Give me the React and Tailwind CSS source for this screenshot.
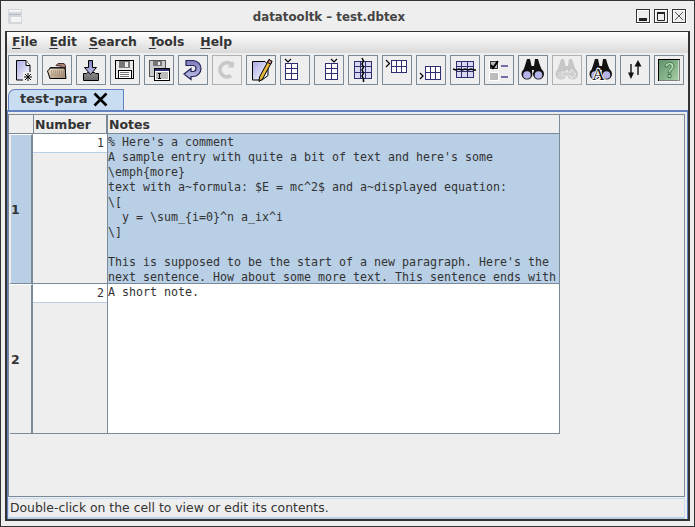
const NAVY = '#2e2e70';

const lines = [
  "% Here's a comment",
  "A sample entry with quite a bit of text and here's some",
  '\\emph{more}',
  'text with a~formula: $E = mc^2$ and a~displayed equation:',
  '\\[',
  '  y = \\sum_{i=0}^n a_ix^i',
  '\\]',
  ' ',
  "This is supposed to be the start of a new paragraph. Here's the",
  'next sentence. How about some more text. This sentence ends with',
];

// shared table glyph, cols and rows are line offsets in px
const Grid = ({ x, y, w, h, cols, rows, fill = '#fff' }) => (
  <g shapeRendering="crispEdges">
    <rect x={x + 1} y={y + 1} width={w} height={h} fill="#fff" />
    <rect x={x + 0.5} y={y + 0.5} width={w} height={h} fill={fill} stroke={NAVY} />
    {cols.map((c) => <path key={c} d={`M${x + c + 0.5} ${y}v${h}`} stroke={NAVY} />)}
    {rows.map((r) => <path key={r} d={`M${x} ${y + r + 0.5}h${w}`} stroke={NAVY} />)}
  </g>
);

const Defs = () => (
  <svg width="0" height="0" className="absolute">
    <defs>
      <linearGradient id="page" x1="0" y1="0" x2="1" y2="1">
        <stop offset="0" stopColor="#a8a8e4" />
        <stop offset="1" stopColor="#ffffff" />
      </linearGradient>
      <linearGradient id="arrow" x1="0" y1="0" x2="0" y2="1">
        <stop offset="0" stopColor="#7a7ab8" />
        <stop offset="1" stopColor="#c4c4ea" />
      </linearGradient>
      <linearGradient id="help" x1="0" y1="0" x2="1" y2="1">
        <stop offset="0" stopColor="#5f9068" />
        <stop offset="1" stopColor="#a8d0a8" />
      </linearGradient>
      <linearGradient id="tray" x1="0" y1="0" x2="0" y2="1">
        <stop offset="0" stopColor="#8a8a8a" />
        <stop offset="1" stopColor="#6a6a6a" />
      </linearGradient>
      <linearGradient id="folder" x1="0" y1="0" x2="1" y2="1">
        <stop offset="0" stopColor="#f4e6d0" />
        <stop offset="1" stopColor="#9a8068" />
      </linearGradient>
    </defs>
  </svg>
);

const Binoculars = ({ color = '#111', lens = '#b4b4ea' }) => (
  <g>
    <path d="M6 1h3l1.500 7h2.500l1-7h3l1.500 5L22 15H13V12h-2v3H1.500L4.500 6z" fill={color} />
    <circle cx="6" cy="16" r="5.500" fill={color} />
    <circle cx="17.500" cy="16" r="5.500" fill={color} />
    <circle cx="6" cy="17" r="3.800" fill={lens} />
    <circle cx="17.500" cy="17" r="3.800" fill={lens} />
  </g>
);

const icons = {
  newFile: (
    <g>
      <path d="M5.500 2.500H15l4 5v10l-5 4.500H5.500z" fill="url(#page)" stroke="#000" />
      <path d="M15 2.500v5h4" fill="#fff" stroke="#000" />
      <rect x="12" y="14" width="10" height="10" fill="#eee" />
      <path d="M17 15v8M13 19h8M14 16l6 6M20 16l-6 6" stroke="#000" />
    </g>
  ),
  open: (
    <g>
      <path d="M11 7.500l2-2h6l1.500 2v13H16V8z" fill="#a57f70" stroke="#4a2c2c" />
      <path d="M5 9.500h15v11H5z" fill="#fff" stroke="#333" />
      <path d="M2.500 13l3-3H20l1 10.500H5z" fill="url(#folder)" stroke="#000" />
      <path d="M6 13h13M6 15h13M6.500 17h13" stroke="#8f7a66" strokeDasharray="1 1" />
    </g>
  ),
  importFile: (
    <g>
      <path d="M4.500 15.500h3l1 -1h7l1 1h3v7h-15z" fill="url(#tray)" stroke="#000" />
      <path d="M9.500 2.500h4v7h4l-6 7-6-7h4z" fill="url(#arrow)" stroke="#000" />
    </g>
  ),
  save: (
    <g shapeRendering="crispEdges">
      <rect x="2.500" y="2.500" width="18" height="18" fill="#e8e8e8" stroke="#000" />
      <rect x="6" y="3" width="11" height="7" fill="#777" />
      <rect x="12" y="4" width="3" height="5" fill="#eee" />
      <rect x="5" y="12" width="13" height="8" fill="#fff" stroke="#000" />
      <path d="M7 14h9M7 16h9M7 18h9" stroke="#777" />
    </g>
  ),
  saveAs: (
    <g shapeRendering="crispEdges">
      <rect x="2.500" y="2.500" width="16" height="16" fill="#ccc" stroke="#555" />
      <rect x="6" y="3" width="9" height="5" fill="#777" />
      <rect x="11" y="4" width="2" height="3" fill="#eee" />
      <rect x="7.500" y="10.500" width="15" height="12" fill="#fff" stroke="#000" />
      <rect x="8" y="11" width="14" height="2" fill={NAVY} />
      <rect x="9" y="14" width="12" height="7" fill="#bbb" />
      <path d="M11 15h3M12.500 15v5M11 20h3" stroke="#000" />
    </g>
  ),
  undo: (
    <g>
      <path d="M5 2.500h7a8 8 0 0 1 0 16H10v3l-7-5.500 7-5.500v3h2a3 3 0 0 0 0-6H5z" fill="url(#arrow)" stroke="#23235a" strokeWidth="1.200" />
    </g>
  ),
  redo: (
    <g>
      <path d="M19 3v6.500h-6.500l2-2a5 5 0 1 0 0 8.500l3 3a9 9 0 1 1 0-14.500z" fill="#c8c8c8" />
    </g>
  ),
  edit: (
    <g>
      <path d="M3.500 3.500H16l3 3v11l-6 4.500H3.500z" fill="url(#page)" stroke="#000" />
      <path d="M20 1.500l3 2L13.500 21 10 23.500 10.500 19z" fill="#e6b93c" stroke="#000" />
      <path d="M20 1.500l3 2-1.500 2.700-3-2z" fill="#d89090" stroke="#000" />
    </g>
  ),
  colAddLeft: (
    <g>
      <path d="M2 1l3 3 3-3" stroke="#000" strokeWidth="1.200" fill="none" />
      <Grid x={2} y={5} w={12} h={16} cols={[6]} rows={[5, 10]} />
    </g>
  ),
  colAddRight: (
    <g>
      <path d="M14 1l3 3 3-3" stroke="#000" strokeWidth="1.200" fill="none" />
      <Grid x={8} y={5} w={12} h={16} cols={[6]} rows={[5, 10]} />
    </g>
  ),
  colDelete: (
    <g>
      <Grid x={3} y={3} w={17} h={17} cols={[6, 11]} rows={[5, 11]} fill="#d8d8f4" />
      <path d="M11 0l1.500 3-1.500 3 1.500 3-1.500 3 1.500 3-1.500 3 1.500 3v3" stroke="#000" strokeWidth="1.500" fill="none" />
    </g>
  ),
  rowAddTop: (
    <g>
      <path d="M1 2l3.500 3.500L1 9" stroke="#000" strokeWidth="1.200" fill="none" />
      <Grid x={6} y={2} w={15} h={12} cols={[5, 10]} rows={[6]} />
    </g>
  ),
  rowAddBottom: (
    <g>
      <path d="M1 15l3 3-3 3" stroke="#000" strokeWidth="1.200" fill="none" />
      <Grid x={6} y={8} w={15} h={13} cols={[5, 10]} rows={[6]} />
    </g>
  ),
  rowDelete: (
    <g>
      <Grid x={3} y={3} w={17} h={16} cols={[5, 11]} rows={[5, 10]} fill="#d8d8f4" />
      <path d="M0 11l3 1 3-1 3 1 3-1 3 1 3-1 3 1 2 0" stroke="#000" strokeWidth="1.500" fill="none" />
    </g>
  ),
  checklist: (
    <g shapeRendering="crispEdges">
      <rect x="2" y="2" width="10" height="10" fill="#fff" />
      <rect x="3.500" y="3.500" width="7" height="7" fill="#bbb" stroke="#333" />
      <path d="M4 7l2 3 5-7" stroke="#000" strokeWidth="2" fill="none" shapeRendering="auto" />
      <rect x="2" y="14" width="10" height="9" fill="#fff" />
      <rect x="3" y="15" width="8" height="7" fill="#bcbcbc" />
      <rect x="14" y="7" width="7" height="2" fill="#7070a8" />
      <rect x="14" y="18" width="7" height="2" fill="#7070a8" />
    </g>
  ),
  find: <Binoculars />,
  findNext: (
    <g>
      <Binoculars color="#c6c6c6" lens="#d2d2d2" />
      <path d="M7 14h9v-3l5 5-5 5v-3H7z" fill="#cfcfcf" stroke="#e6e6e6" />
    </g>
  ),
  replace: (
    <g>
      <Binoculars />
      <text x="9.500" y="22" fontFamily="Liberation Serif, serif" fontSize="17" textAnchor="middle" fill="#000" stroke="#fff" strokeWidth="2" paintOrder="stroke">A</text>
    </g>
  ),
  sort: (
    <g>
      <path d="M8 6v11" stroke="#222" strokeWidth="1.500" />
      <path d="M5 14.500h6L8 21z" fill="#111" />
      <path d="M15 6v11" stroke="#222" strokeWidth="1.500" />
      <path d="M11.500 8.500L15 2l3.500 6.500z" fill="#111" />
    </g>
  ),
  help: (
    <g>
      <rect x="1.500" y="1.500" width="21" height="21" fill="url(#help)" stroke="#000" />
      <path d="M22 2v21H2" stroke="#fff" fill="none" />
      <path d="M8 9c0-6 9-6 9-.500 0 3-3.500 3-3.500 6.500h-2.500c0-4 3.200-4 3.200-6.500 0-2.500-3.500-2.500-3.700.500zM11 16.500h3v3h-3z" fill="#b4dcb4" stroke="#2f5f3a" strokeWidth="0.800" />
    </g>
  ),
};

const toolbar = [
  'newFile', 'open', 'importFile', 'save', 'saveAs', 'undo', 'redo', 'edit', 'colAddLeft', 'colAddRight',
  'colDelete', 'rowAddTop', 'rowAddBottom', 'rowDelete', 'checklist', 'find', 'findNext', 'replace', 'sort', 'help',
];

const disabled = ['redo', 'findNext'];

const ToolButton = ({ name }) => (
  <button
    className={`flex h-[30px] w-[30px] items-center justify-center border bg-[#eeeeee] ${
      disabled.includes(name) ? 'border-[#b0b0b0]' : 'border-[#7a8a99]'
    }`}
  >
    <svg width="24" height="24" viewBox="0 0 24 24" className="overflow-visible">
      {icons[name]}
    </svg>
  </button>
);

const MenuItem = ({ first, rest }) => (
  <span className="last:ml-[4px]">
    <span className="underline underline-offset-2">{first}</span>
    {rest}
  </span>
);

const WinButton = ({ children }) => (
  <div className="h-[14px] w-[14px] border border-[#333] shadow-[inset_1px_1px_0_#fff,1px_1px_0_#fff]">
    <svg width="12" height="12" viewBox="0 0 12 12">
      {children}
    </svg>
  </div>
);

const RowHeader = ({ label, selected }) => (
  <div
    className={`flex h-[150px] items-center border-t border-r-2 border-b border-l-2 border-t-white border-r-[#7a8a99] border-b-[#7a8a99] border-l-[#eeeeee] pt-[2px] text-[12.500px] font-bold text-[#333] ${
      selected ? 'bg-[#b8cfe5]' : 'bg-[#eeeeee]'
    }`}
  >
    {label}
  </div>
);

const NumberCell = ({ value }) => (
  <div className="h-[150px] border-r border-b border-[#7a8a99] bg-[#eeeeee]">
    <div className="h-[19px] border-b border-[#b8cfe5] bg-white pt-[1px] pr-[3px] text-right font-['DejaVu_Sans_Mono',monospace] text-[11.640px] leading-[16px] text-[#333]">
      {value}
    </div>
  </div>
);

export default function App() {
  return (
    <div className="flex h-[527px] w-[695px] flex-col overflow-hidden border border-[#333] bg-[#eeeeee] font-['DejaVu_Sans',sans-serif]">
      <Defs />
      {/* title bar */}
      <div className="flex h-[30px] shrink-0 items-center pr-[8px] pl-[7px]">
        <svg width="14" height="15" viewBox="0 0 14 15" className="mt-[1px]">
          <rect width="14" height="15" fill="#d4d8dc" />
          <rect x="1" y="1" width="12" height="2" fill="#f4f4f4" />
          <rect x="1" y="5" width="12" height="1" fill="#b0b8c0" />
          <rect x="3" y="8" width="10" height="5" fill="#f4f4f4" />
        </svg>
        <div className="flex-1 pt-[3px] text-center text-[11.800px] font-bold text-[#444]">datatooltk – test.dbtex</div>
        <div className="flex gap-[4px]">
          <WinButton>
            <rect x="2" y="8" width="8" height="3" fill="#222" />
          </WinButton>
          <WinButton>
            <path d="M2.500 3.500h7v7h-7z" fill="none" stroke="#222" />
            <rect x="2" y="2" width="8" height="2" fill="#222" />
          </WinButton>
          <WinButton>
            <path d="M2 2l8 8M10 2l-8 8" stroke="#555" />
          </WinButton>
        </div>
      </div>

      {/* main frame */}
      <div className="mx-[4px] flex h-[490px] flex-col border-x-2 border-t border-b-2 border-[#333] bg-[#eeeeee]">
        <div className="flex h-[21px] shrink-0 items-center gap-[12px] bg-gradient-to-b from-white to-[#dadada] pb-[1px] pl-[5px] text-[12.400px] font-bold text-[#333]">
          <MenuItem first="F" rest="ile" />
          <MenuItem first="E" rest="dit" />
          <MenuItem first="S" rest="earch" />
          <MenuItem first="T" rest="ools" />
          <MenuItem first="H" rest="elp" />
        </div>

        <div className="flex h-[34px] shrink-0 items-center gap-[4px] pl-[1px]">
          {toolbar.map((name) => <ToolButton key={name} name={name} />)}
        </div>

        {/* tab strip */}
        <div className="mt-[2px] flex h-[21px] shrink-0 pl-[1px]">
          <div className="flex w-[116px] items-center gap-[5px] rounded-tl-[7px] border-x border-t border-[#6382bf] bg-[#c8ddf2] pb-[2px] pl-[11px] text-[13px] font-bold text-[#333]">
            test-para
            <svg width="15" height="15" viewBox="0 0 15 15">
              <path d="M1.500 1.500l12 12M13.500 1.500l-12 12" stroke="#000" strokeWidth="2.600" />
            </svg>
          </div>
        </div>

        <div className="flex min-h-0 flex-1 flex-col border-x border-t-2 border-[#6382bf] pt-[2px] pr-[2px]">
          {/* table */}
          <div className="min-h-0 flex-1 border border-[#7a8a99]">
            <div className="grid w-[551px] grid-cols-[24px_75px_452px] bg-[#eeeeee]">
              <div className="h-[19px] border-b border-[#7a8a99]" />
              <div className="h-[19px] border-r-2 border-b border-l border-[#7a8a99] pt-[1px] pl-[1px] text-[12.500px] leading-[18px] font-bold text-[#333]">
                Number
              </div>
              <div className="h-[19px] border-r border-b border-[#7a8a99] pt-[1px] pl-[1px] text-[12.500px] leading-[18px] font-bold text-[#333]">
                Notes
              </div>

              <RowHeader label="1" selected />
              <NumberCell value="1" />
              <div className="h-[150px] overflow-hidden border-r border-b border-[#7a8a99] bg-[#b8cfe5] pt-[1px] font-['DejaVu_Sans_Mono',monospace] text-[11.640px] leading-[15px] whitespace-pre text-[#333]">
                {lines.map((line, i) => <div key={i}>{line}</div>)}
              </div>

              <RowHeader label="2" />
              <NumberCell value="2" />
              <div className="h-[150px] border-r border-b border-[#7a8a99] bg-white pt-[1px] font-['DejaVu_Sans_Mono',monospace] text-[11.640px] leading-[15px] whitespace-pre text-[#333]">
                A short note.
              </div>
            </div>
          </div>

          {/* status bar */}
          <div className="mt-[1px] flex h-[21px] shrink-0 items-center border border-b-2 border-[#c8ddf2] border-b-[#b8cfe5] pl-[1px] text-[12.400px] text-[#333]">
            Double-click on the cell to view or edit its contents.
          </div>
        </div>
      </div>
    </div>
  );
}
